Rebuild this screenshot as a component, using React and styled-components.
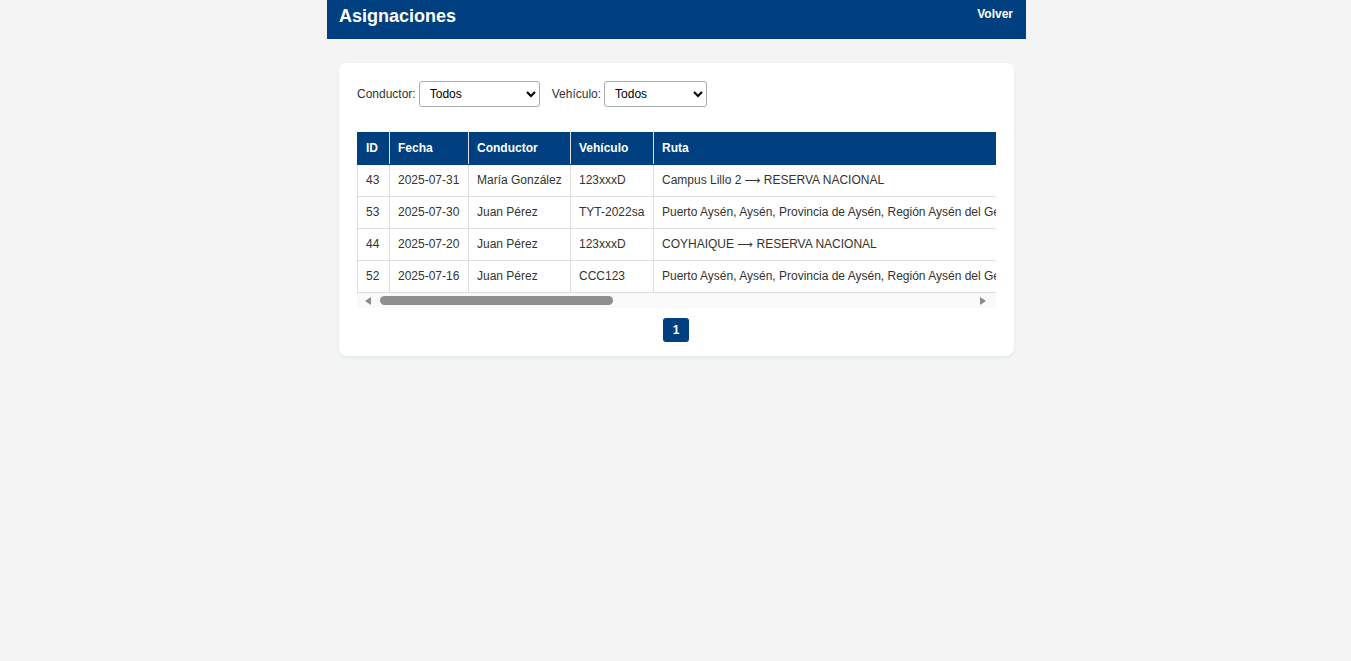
import React from 'react';
import styled, { createGlobalStyle } from 'styled-components';

const GlobalStyle = createGlobalStyle`
  html, body {
    margin: 0;
    padding: 0;
    background: #f4f4f4;
    font-family: "Liberation Sans", Arial, sans-serif;
  }
  * { box-sizing: border-box; }
`;

const Shell = styled.div`
  padding-left: 2px;
`;

const Page = styled.div`
  width: 699px;
  margin: 0 auto;
`;

const TopBar = styled.header`
  background: #004080;
  color: #fff;
  height: 39px;
  padding: 0 13px 0 12px;
  display: flex;
  justify-content: space-between;
  align-items: flex-start;
`;

const Title = styled.h1`
  margin: 6px 0 0;
  font-size: 18px;
  font-weight: bold;
  line-height: 21px;
`;

const BackButton = styled.button`
  margin-top: 7px;
  padding: 0;
  border: none;
  background: none;
  color: #fff;
  font-family: inherit;
  font-size: 12px;
  font-weight: bold;
  line-height: 15px;
  cursor: pointer;
`;

const Card = styled.section`
  margin: 24px 12px;
  background: #fff;
  border-radius: 8px;
  padding: 18px 18px 14px;
  box-shadow: 0 2px 3px rgba(0, 170, 150, 0.1);
`;

const Filters = styled.div`
  display: flex;
  align-items: center;
  gap: 3px;
  font-size: 12px;
  color: #333;
  margin-bottom: 25px;
`;

const Label = styled.label`
  margin-left: ${p => (p.$first ? '0' : '9px')};
`;

const Select = styled.select`
  width: ${p => p.$w}px;
  height: 26px;
  font-family: inherit;
  font-size: 12px;
  color: #000;
  background: #fff;
  border: 1px solid #aaa;
  border-radius: 3px;
  padding: 0 6px;
`;

const Scroller = styled.div`
  overflow-x: auto;
  width: 100%;
  scrollbar-width: none;
  &::-webkit-scrollbar { display: none; }
`;

/* drawn horizontal scrollbar, like the classic desktop one */
const ScrollBar = styled.div`
  display: flex;
  align-items: center;
  height: 15px;
  background: #f9f9f9;
`;

const ScrollButton = styled.div`
  width: 20px;
  height: 15px;
  display: flex;
  align-items: center;
  padding-left: ${p => (p.$dir === 'left' ? 8 : 4)}px;

  &::before {
    content: '';
    width: 0;
    height: 0;
    border-top: 4px solid transparent;
    border-bottom: 4px solid transparent;
    ${p => (p.$dir === 'left'
      ? 'border-right: 6px solid #8a8a8a;'
      : 'border-left: 6px solid #8a8a8a;')}
  }
`;

const Track = styled.div`
  flex: 1;
  height: 15px;
  display: flex;
  align-items: center;
  padding-left: 3px;
`;

const Thumb = styled.div`
  width: ${p => p.$w}px;
  height: 9px;
  border-radius: 5px;
  background: #8f8f8f;
`;

const Table = styled.table`
  border-collapse: collapse;
  font-size: 12px;
  white-space: nowrap;
`;

const Th = styled.th`
  background: #004080;
  color: #fff;
  font-weight: bold;
  text-align: left;
  padding: 8px;
  line-height: 15px;
  min-width: ${p => (p.$min ? `${p.$min}px` : 'auto')};
  border: 1px solid #ddd;
  border-top-color: #004080;
  border-bottom-color: #004080;
  &:first-child { border-left-color: #004080; }
`;

const Td = styled.td`
  color: #333;
  padding: 8px;
  line-height: 15px;
  border: 1px solid #ddd;
`;

const Arrow = styled.span`
  font-family: "DejaVu Sans", sans-serif;
  font-size: 11px;
`;

const Pager = styled.div`
  display: flex;
  justify-content: center;
  margin-top: 10px;
  padding-right: 1px;
`;

const PageButton = styled.button`
  width: 26px;
  height: 24px;
  border: none;
  border-radius: 3px;
  background: #004080;
  color: #fff;
  font-family: inherit;
  font-weight: bold;
  font-size: 12px;
  padding: 0;
`;

const aysen = [
  'Puerto Aysén, Aysén, Provincia de Aysén, Región Aysén del General Carlos Ibáñez del Campo, Chile',
  'Coyhaique, Provincia de Coyhaique, Región Aysén del General Carlos Ibáñez del Campo, Chile',
];

const rows = [
  { id: 43, fecha: '2025-07-31', conductor: 'María González', vehiculo: '123xxxD', ruta: ['Campus Lillo 2', 'RESERVA NACIONAL'], estado: 'Pendiente' },
  { id: 53, fecha: '2025-07-30', conductor: 'Juan Pérez', vehiculo: 'TYT-2022sa', ruta: aysen, estado: 'Pendiente' },
  { id: 44, fecha: '2025-07-20', conductor: 'Juan Pérez', vehiculo: '123xxxD', ruta: ['COYHAIQUE', 'RESERVA NACIONAL'], estado: 'Completada' },
  { id: 52, fecha: '2025-07-16', conductor: 'Juan Pérez', vehiculo: 'CCC123', ruta: aysen, estado: 'Completada' },
];

export default function App() {
  return (
    <Shell>
      <GlobalStyle />
      <Page>
        <TopBar>
          <Title>Asignaciones</Title>
          <BackButton>Volver</BackButton>
        </TopBar>
        <Card>
          <Filters>
            <Label $first>Conductor:</Label>
            <Select $w={121} defaultValue="todos">
              <option value="todos">Todos</option>
              <option>María González</option>
              <option>Juan Pérez</option>
            </Select>
            <Label>Vehículo:</Label>
            <Select $w={103} defaultValue="todos">
              <option value="todos">Todos</option>
              <option>123xxxD</option>
              <option>TYT-2022sa</option>
              <option>CCC123</option>
            </Select>
          </Filters>
          <Scroller>
            <Table>
              <thead>
                <tr>
                  <Th $min={32}>ID</Th>
                  <Th $min={79}>Fecha</Th>
                  <Th $min={102}>Conductor</Th>
                  <Th $min={83}>Vehículo</Th>
                  <Th>Ruta</Th>
                  <Th>Estado</Th>
                  <Th $min={130}>Acciones</Th>
                </tr>
              </thead>
              <tbody>
                {rows.map(r => (
                  <tr key={r.id}>
                    <Td>{r.id}</Td>
                    <Td>{r.fecha}</Td>
                    <Td>{r.conductor}</Td>
                    <Td>{r.vehiculo}</Td>
                    <Td>
                      {r.ruta[0]} <Arrow>⟶</Arrow> {r.ruta[1]}
                    </Td>
                    <Td>{r.estado}</Td>
                    <Td>Ver detalle</Td>
                  </tr>
                ))}
              </tbody>
            </Table>
          </Scroller>
          <ScrollBar>
            <ScrollButton $dir="left" />
            <Track>
              <Thumb $w={233} />
            </Track>
            <ScrollButton $dir="right" />
          </ScrollBar>
          <Pager>
            <PageButton>1</PageButton>
          </Pager>
        </Card>
      </Page>
    </Shell>
  );
}
